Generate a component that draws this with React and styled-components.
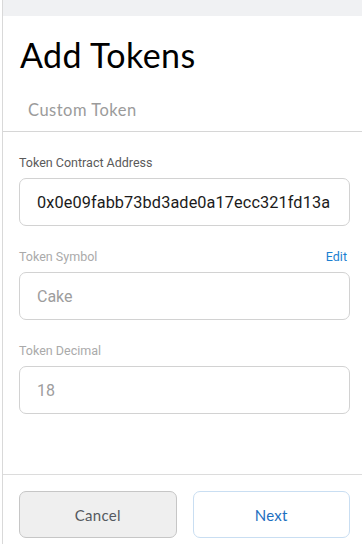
import React from 'react';
import styled, { createGlobalStyle } from 'styled-components';

const GlobalStyle = createGlobalStyle`
  html, body {
    margin: 0;
    padding: 0;
    background: white;
  }
  body {
    font-family: Roboto, "Liberation Sans", sans-serif;
  }
`;

const Page = styled.div`
  display: flex;
  width: 362px;
  height: 544px;
  overflow: hidden;
  background: white;
`;

const Gutter = styled.div`
  width: 2px;
  flex-shrink: 0;
  background: white;
`;

const Panel = styled.div`
  flex: 1;
  display: flex;
  flex-direction: column;
  border-left: 1px solid #d9d9d9;
  min-width: 0;
`;

const TopBand = styled.div`
  height: 16px;
  background: #f0f1f3;
`;

const Title = styled.h1`
  margin: 0;
  padding: 19px 0 0 17px;
  font-family: Lato, "Noto Sans", sans-serif;
  font-weight: 400;
  font-size: 34px;
  letter-spacing: 0.4px;
  line-height: 40px;
  color: #000;
`;

const TabBar = styled.div`
  display: flex;
  padding: 0 0 0 25px;
  height: 56px;
  align-items: center;
  border-bottom: 1px solid #d6d6d6;
`;

const Tab = styled.div`
  font-family: Lato, "Noto Sans", sans-serif;
  font-size: 16.5px;
  letter-spacing: 0.5px;
  color: #9b9b9b;
  padding-top: 14px;
`;

const Form = styled.div`
  flex: 1;
  display: flex;
  flex-direction: column;
  gap: 21px;
  padding: 21px 12px 0 16px;
`;

const Field = styled.div`
  display: flex;
  flex-direction: column;
`;

const LabelRow = styled.div`
  display: flex;
  justify-content: space-between;
  align-items: center;
  height: 18px;
  margin-bottom: 7px;
  padding-right: 3px;
`;

const Label = styled.span`
  font-size: 12.5px;
  color: ${p => (p.muted ? '#aaaaaa' : '#5a5a5a')};
`;

const EditLink = styled.span`
  font-size: 12.5px;
  color: #1c7fd1;
`;

const InputBox = styled.div`
  height: 46px;
  border: 1px solid #d2d2d2;
  border-radius: 7px;
  display: flex;
  align-items: center;
  padding-left: 17px;
  font-size: ${p => (p.muted ? '16px' : '16.3px')};
  letter-spacing: ${p => (p.muted ? '0' : '0.1px')};
  color: ${p => (p.muted ? '#9d9d9d' : '#1b1b1b')};
  white-space: nowrap;
  overflow: hidden;
`;

const Footer = styled.div`
  display: flex;
  gap: 16px;
  padding: 16px 12px 6px 16px;
  border-top: 1px solid #dcdcdc;
`;

const Button = styled.button`
  flex: 1;
  height: 47px;
  border-radius: 7px;
  font-family: Lato, "Noto Sans", sans-serif;
  font-size: 15px;
  letter-spacing: 0.3px;
  cursor: pointer;
  background: ${p => (p.primary ? '#ffffff' : '#efefef')};
  border: 1px solid ${p => (p.primary ? '#c9def2' : '#c6c6c6')};
  color: ${p => (p.primary ? '#1c6fbf' : '#555a60')};
`;

export default function App() {
  return (
    <>
      <GlobalStyle />
      <Page>
        <Gutter />
        <Panel>
          <TopBand />
          <Title>Add Tokens</Title>
          <TabBar>
            <Tab>Custom Token</Tab>
          </TabBar>
          <Form>
            <Field>
              <LabelRow>
                <Label>Token Contract Address</Label>
              </LabelRow>
              <InputBox>0x0e09fabb73bd3ade0a17ecc321fd13a</InputBox>
            </Field>
            <Field>
              <LabelRow>
                <Label muted>Token Symbol</Label>
                <EditLink>Edit</EditLink>
              </LabelRow>
              <InputBox muted>Cake</InputBox>
            </Field>
            <Field>
              <LabelRow>
                <Label muted>Token Decimal</Label>
              </LabelRow>
              <InputBox muted>18</InputBox>
            </Field>
          </Form>
          <Footer>
            <Button>Cancel</Button>
            <Button primary>Next</Button>
          </Footer>
        </Panel>
      </Page>
    </>
  );
}
